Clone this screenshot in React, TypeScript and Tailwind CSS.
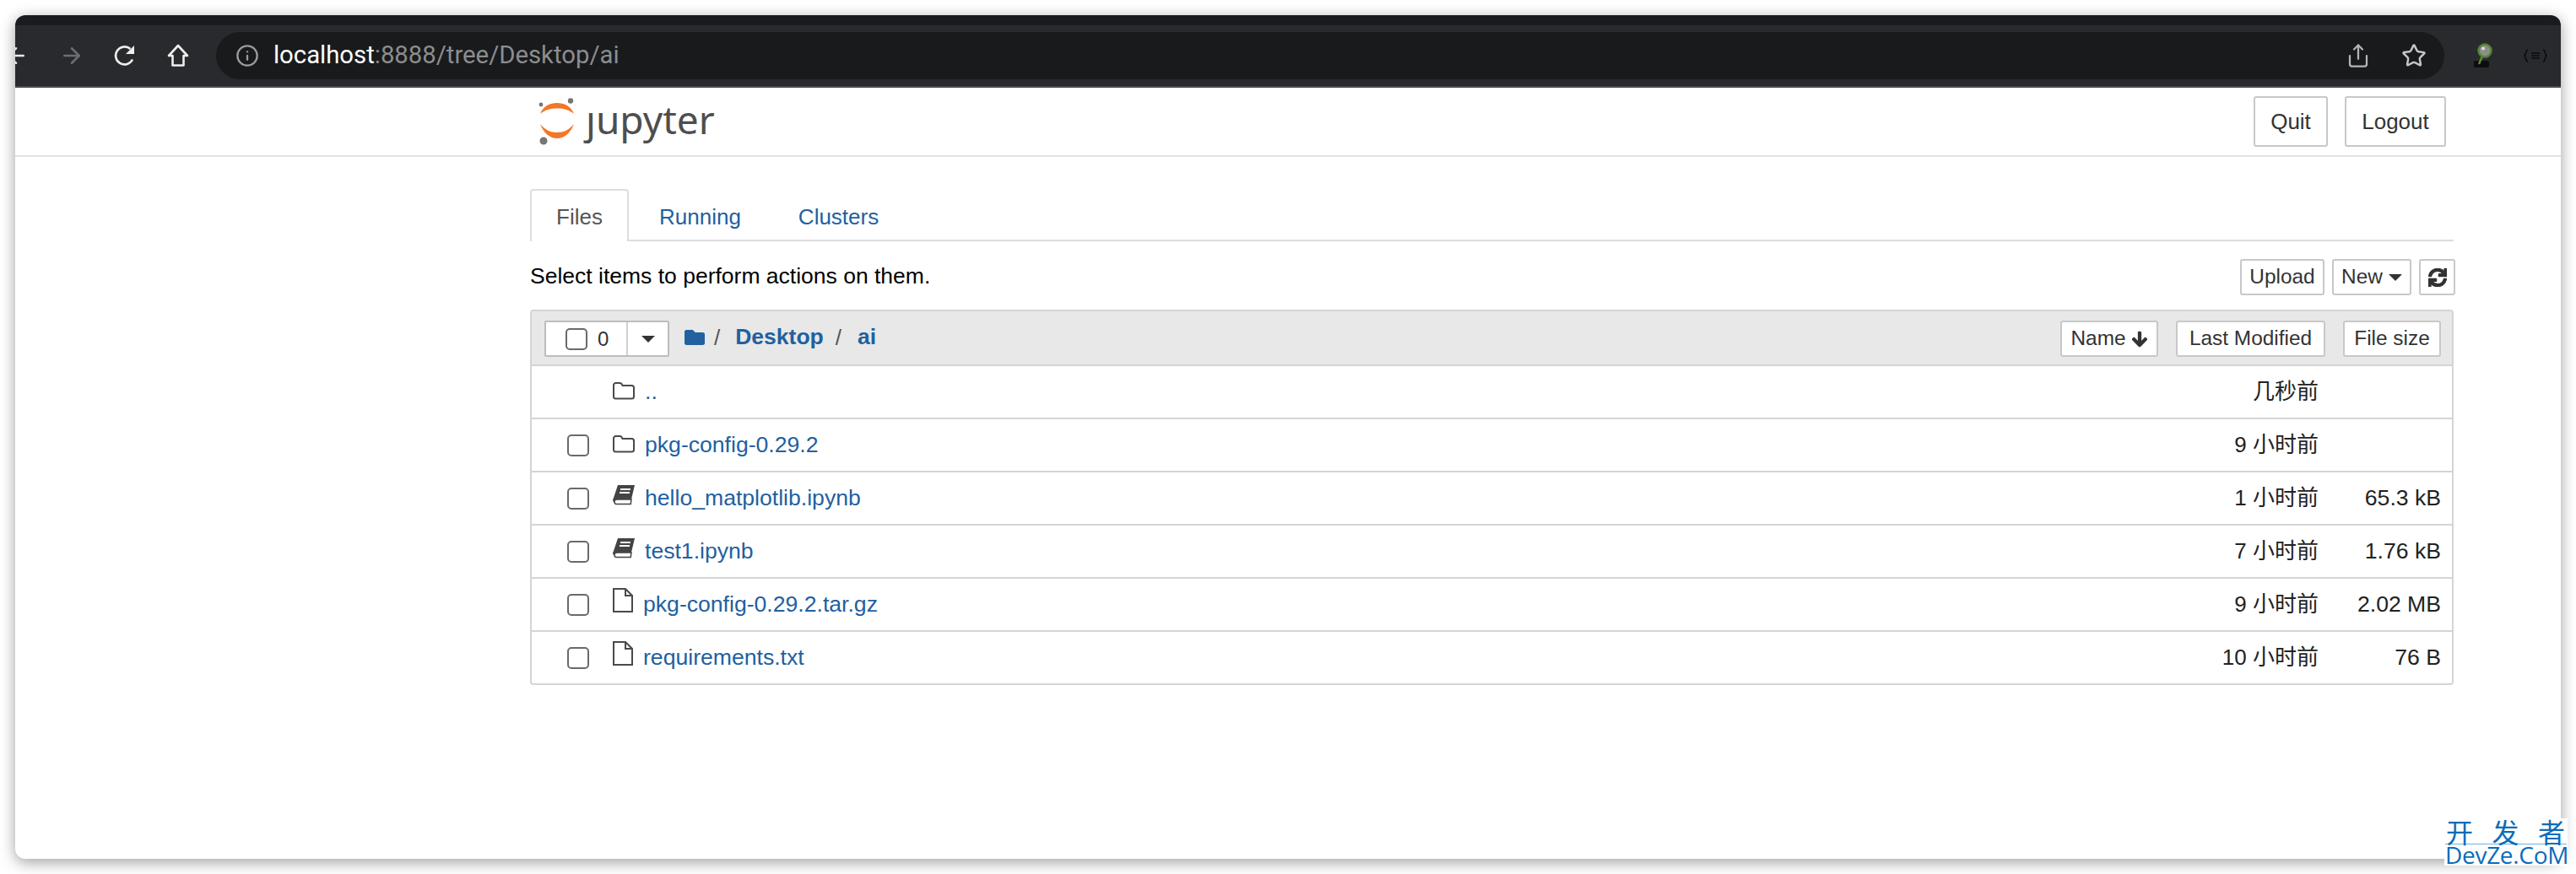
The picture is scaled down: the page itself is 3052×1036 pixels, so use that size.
import { ArrowLeft, ArrowRight, Info, Share, Star } from 'lucide-react';
import { FaArrowDown, FaFolder, FaSync } from 'react-icons/fa';

const rows = [
  { name: '..', kind: 'folder', time: '几秒前', size: '', noCheck: true },
  { name: 'pkg-config-0.29.2', kind: 'folder', time: '9 小时前', size: '' },
  { name: 'hello_matplotlib.ipynb', kind: 'book', time: '1 小时前', size: '65.3 kB' },
  { name: 'test1.ipynb', kind: 'book', time: '7 小时前', size: '1.76 kB' },
  { name: 'pkg-config-0.29.2.tar.gz', kind: 'file', time: '9 小时前', size: '2.02 MB' },
  { name: 'requirements.txt', kind: 'file', time: '10 小时前', size: '76 B' },
];

function FolderIcon() {
  return (
    <svg width="26" height="21" viewBox="0 0 26 21" fill="none" stroke="#4a4a4a" strokeWidth="2" className="mt-[-3px] shrink-0">
      <path d="M1 17V3.500A2.500 2.500 0 0 1 3.500 1h5a2.500 2.500 0 0 1 2.200 1.500L11.500 4h11A2.500 2.500 0 0 1 25 6.500V17a2.500 2.500 0 0 1-2.500 2.500h-19A2.500 2.500 0 0 1 1 17Z" />
    </svg>
  );
}

function BookIcon() {
  return (
    <svg width="26" height="25" viewBox="0 0 26 25" className="mt-[-6px] shrink-0">
      <path d="M6 0h20l-5 21H4C1 21 0 19 0 17.500L1 15Z" fill="#444" />
      <path d="M2 19.500C2 18 3 17 5 17h17l-.8 5.500H4C2.500 22.500 2 21 2 19.500Z" fill="#fff" stroke="#444" strokeWidth="1.500" />
      <path d="M9 5h12M8 9h12" stroke="#fff" strokeWidth="2" />
    </svg>
  );
}

function FileIcon() {
  return (
    <svg width="24" height="29" viewBox="0 0 24 29" fill="none" stroke="#4a4a4a" strokeWidth="2" className="mt-[-10px] shrink-0">
      <path d="M1 1h14l8 8v19H1Z" />
      <path d="M15 1v8h8" />
    </svg>
  );
}

function Checkbox() {
  return <span className="block h-[26px] w-[26px] rounded-[5px] border-2 border-[#6a6a6a] bg-white" />;
}

function Btn({ children, className }: { children: React.ReactNode; className: string }) {
  return (
    <button className={`flex items-center justify-center rounded-[3px] border-2 border-[#c8c8c8] bg-white text-[#333] ${className}`}>
      {children}
    </button>
  );
}

function Caret() {
  return <span className="block h-0 w-0 border-x-[8px] border-t-[8px] border-x-transparent border-t-[#333]" />;
}

export default function App() {
  return (
    <div className="h-[1036px] w-[3052px] overflow-hidden bg-white p-[18px] font-['Liberation_Sans','Noto_Sans_CJK_SC',sans-serif] text-[26px] text-black">
      <div className="relative h-[1000px] w-[3016px] overflow-hidden rounded-[12px] bg-white shadow-[0_4px_18px_rgba(0,0,0,0.38)]">
        {/* browser chrome */}
        <div className="h-[12px] bg-[#1a1b1e]" />
        <div className="flex h-[74px] items-start border-b-2 border-[#4b4b4f] bg-[#292a2e] pt-[8px]">
          <div className="flex h-[56px] w-[238px] shrink-0 items-center">
            <ArrowLeft size={30} strokeWidth={2} className="ml-[-14px] text-[#e8e8e8]" />
            <ArrowRight size={30} strokeWidth={2} className="ml-[36px] text-[#6c6d70]" />
            <svg width="30" height="30" viewBox="0 0 30 30" fill="none" className="ml-[33px]">
              <path d="M24 19.500A10.500 10.500 0 1 1 21.500 7" stroke="#eee" strokeWidth="2.600" />
              <path d="M26 3v10h-10Z" fill="#eee" />
            </svg>
            <svg width="28" height="28" viewBox="0 0 28 28" fill="none" stroke="#eee" strokeWidth="2.600" className="ml-[34px]">
              <path d="M14 2 3 14h4.500v11.500h13V14H25Z" strokeLinejoin="round" />
            </svg>
          </div>
          <div className="flex h-[56px] w-[2640px] shrink-0 items-center rounded-full bg-[#191a1c] pl-[23px]">
            <Info size={28} strokeWidth={2} className="text-[#9a9b9d]" />
            <span className="ml-[17px] font-['Roboto',sans-serif] text-[29.300px] text-[#8c8d90]">
              <span className="text-white">localhost</span>:8888/tree/Desktop/ai
            </span>
            <Share size={30} strokeWidth={1.8} className="ml-auto text-[#b4b5b7]" />
            <Star size={30} strokeWidth={2} className="ml-[36px] mr-[21px] text-[#c4c5c7]" />
          </div>
          <div className="flex h-[56px] items-center">
            <svg width="26" height="30" viewBox="0 0 26 30" className="ml-[32px]">
              <rect x="3" y="21" width="18" height="8" rx="2" fill="#0d0d0d" />
              <path d="M9 25 14 13" stroke="#5d8a3a" strokeWidth="2.500" />
              <circle cx="16" cy="9" r="7.500" fill="#8d8d8d" stroke="#55852f" strokeWidth="2.500" />
              <circle cx="14" cy="6.500" r="2" fill="#ddd" />
            </svg>
            <svg width="28" height="16" viewBox="0 0 28 16" fill="none" stroke="#0b0b0b" strokeWidth="1.500" className="ml-[36px]">
              <path d="M5 1C2 1 3 7 1 8c2 1 1 7 4 7M23 1c3 0 2 6 4 7-2 1-1 7-4 7" />
              <path d="M9 5h10M9 8h10M9 11h10" />
            </svg>
          </div>
        </div>

        {/* notebook header */}
        <div className="flex h-[82px] items-center border-b-2 border-[#e2e2e2] pl-[620px]">
          <svg width="44" height="56" viewBox="0 0 44 56" className="shrink-0">
            <path d="M2 19C6 9 14 6 22 6c8 0 16 3 20 13-6-5-12-6.500-20-6.500S8 14 2 19Z" fill="#f37726" />
            <path d="M2 31c6 7 12 10 20 10s14-3 20-10c-4 11-12 17-20 17S6 42 2 31Z" fill="#f37726" />
            <circle cx="38" cy="3.500" r="3.200" fill="#767677" />
            <circle cx="3" cy="8" r="2.400" fill="#767677" />
            <circle cx="6" cy="51" r="4.500" fill="#767677" />
          </svg>
          <span className="ml-[12px] mt-[-6px] font-['Noto_Sans',sans-serif] text-[46px] leading-none text-[#4e4e4e]">
            <span className="inline-block [clip-path:inset(32%_-20%_-40%_-40%)]">j</span>upyter
          </span>
          <Btn className="ml-auto h-[60px] w-[88px]">Quit</Btn>
          <Btn className="ml-[20px] mr-[136px] h-[60px] w-[120px]">Logout</Btn>
        </div>

        {/* tree view */}
        <div className="ml-[610px] w-[2279px] pt-[38px]">
          <div className="flex h-[62px] items-stretch border-b-2 border-[#ddd]">
            <div className="mb-[-2px] flex w-[117px] items-center justify-center rounded-t-[4px] border-2 border-b-0 border-[#ddd] bg-white pt-[2px] text-[#555]">Files</div>
            <div className="ml-[36px] flex items-center pt-[6px] text-[#22609f]">Running</div>
            <div className="ml-[68px] flex items-center pt-[6px] text-[#22609f]">Clusters</div>
          </div>

          <div className="mr-[-2px] mt-[21px] flex h-[43px] items-center justify-between">
            <span className="mt-[-1px] text-[26.500px]">Select items to perform actions on them.</span>
            <div className="flex gap-[9px] text-[24.400px]">
              <Btn className="h-[43px] w-[100px]">Upload</Btn>
              <Btn className="h-[43px] w-[94px] gap-[7px]">New <Caret /></Btn>
              <Btn className="h-[43px] w-[43px]"><FaSync size={22} stroke="currentColor" strokeWidth={30} /></Btn>
            </div>
          </div>

          <div className="mt-[17px] overflow-hidden rounded-[4px] border-2 border-[#d4d4d4]">
            <div className="flex h-[65px] items-center border-b-2 border-[#d4d4d4] bg-[#e8e8e8] pl-[15px]">
              <div className="mt-[2px] flex h-[43px] w-[148px] rounded-[2px] border-2 border-[#bdbdbd] bg-white">
                <div className="flex w-[97px] items-center border-r-2 border-[#d0d0d0] pl-[23px] text-[24px] text-[#333]">
                  <Checkbox />
                  <span className="ml-[12px]">0</span>
                </div>
                <div className="flex flex-1 items-center justify-center"><Caret /></div>
              </div>
              <FaFolder size={24} className="ml-[18px] mt-[-1px] text-[#22609f]" />
              <span className="ml-[11px] mt-[-1px] text-[#555]">/</span>
              <span className="ml-[18px] mt-[-1px] text-[26.500px] font-bold text-[#22609f]">Desktop</span>
              <span className="ml-[14px] mt-[-1px] text-[#555]">/</span>
              <span className="ml-[19px] mt-[-1px] text-[26.500px] font-bold text-[#22609f]">ai</span>
              <div className="ml-auto mr-[13px] mt-[2px] flex gap-[21px] text-[24.400px]">
                <Btn className="h-[43px] w-[116px] gap-[6px]">Name <FaArrowDown size={20} stroke="currentColor" strokeWidth={30} /></Btn>
                <Btn className="h-[43px] w-[177px]">Last Modified</Btn>
                <Btn className="h-[43px] w-[116px]">File size</Btn>
              </div>
            </div>
            {rows.map((row, i) => (
              <div key={row.name} className={`flex items-center pl-[42px] text-[26.600px] ${i < rows.length - 1 ? 'h-[63px] border-b-2 border-[#d4d4d4]' : 'h-[61px]'}`}>
                <div className="w-[26px]">{!row.noCheck && <Checkbox />}</div>
                <div className="ml-[28px] flex w-[38px] items-center">
                  {row.kind === 'folder' && <FolderIcon />}
                  {row.kind === 'book' && <BookIcon />}
                  {row.kind === 'file' && <FileIcon />}
                </div>
                <span className={`text-[#22609f] ${row.kind === 'file' ? 'ml-[-2px]' : ''}`}>{row.name}</span>
                <span className="ml-auto text-right text-[26px] text-[#222]">{row.time}</span>
                <span className="mr-[13px] w-[145px] text-right text-[#222]">{row.size}</span>
              </div>
            ))}
          </div>
        </div>
      </div>

      {/* site watermark */}
      <div className="absolute left-[2896px] top-[970px] flex h-[56px] w-[146px] flex-col bg-white px-[1px] text-[#0b6cb8]">
        <div className="flex h-[31px] items-center justify-between border-b border-[#6db3e0] pl-[1px] pr-[2px] font-['Noto_Sans_CJK_SC',sans-serif] text-[32px] leading-none">
          <span>开</span>
          <span>发</span>
          <span>者</span>
        </div>
        <div className="text-center font-['Open_Sans',sans-serif] text-[28px] leading-[25px] tracking-[-0.3px]">DevZe.CoM</div>
      </div>
    </div>
  );
}
